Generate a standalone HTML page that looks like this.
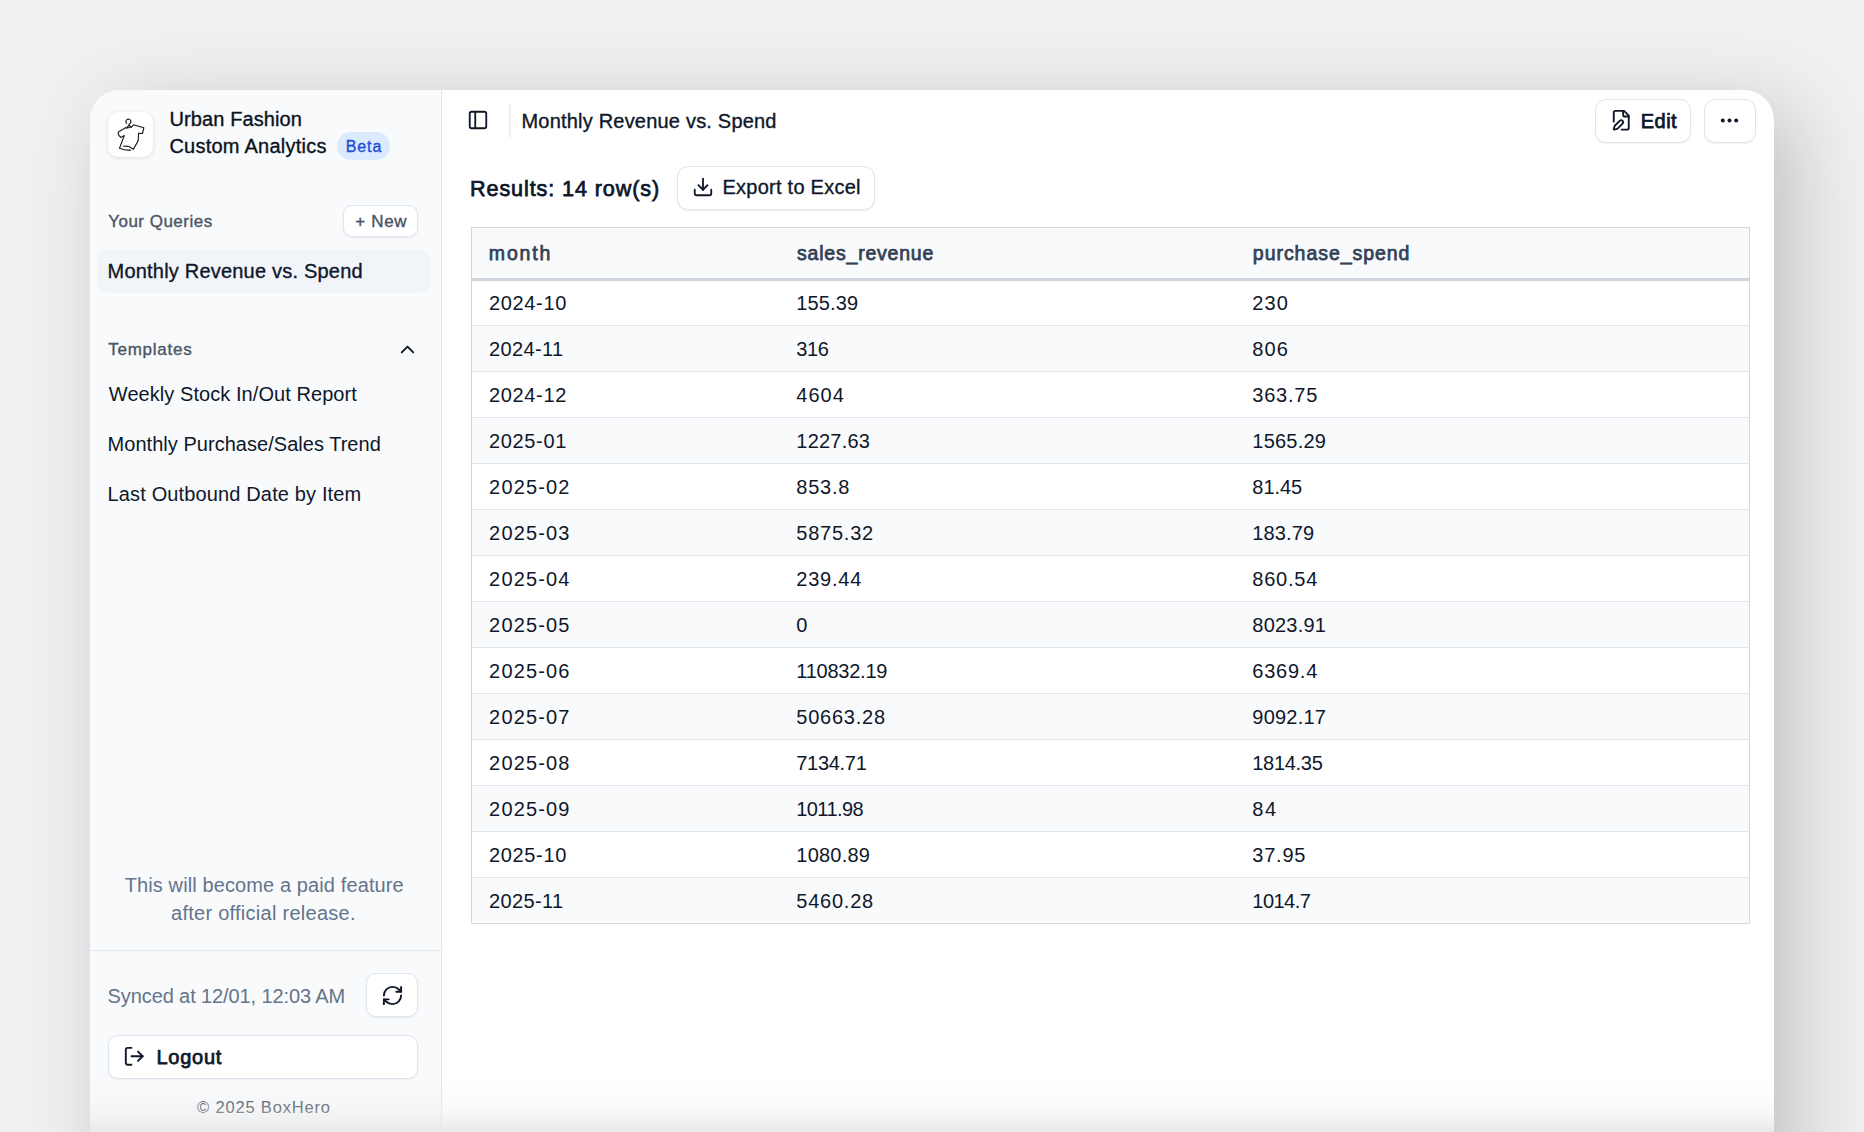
<!DOCTYPE html>
<html><head><meta charset="utf-8"><style>
html,body{margin:0;padding:0}
body{width:1864px;height:1132px;overflow:hidden;position:relative;background:#f0f0f2;font-family:"Liberation Sans", sans-serif}
.t{position:absolute;white-space:nowrap;line-height:1}
.abs{position:absolute}
.btn{position:absolute;background:#fff;border:1px solid #dfe5ee;box-sizing:border-box;box-shadow:0 1px 2px rgba(15,23,42,.06)}
svg.ic{position:absolute;fill:none;stroke:#0f172a;stroke-width:2;stroke-linecap:round;stroke-linejoin:round}
</style></head><body>
<div class="abs" style="left:90px;top:90px;width:1684px;height:1200px;border-radius:30px;background:#fff;box-shadow:21px 21px 80px rgba(0,0,0,.2)"></div>
<div class="abs" style="left:90px;top:90px;width:351px;height:1200px;border-top-left-radius:30px;background:#f8fafc;border-right:1px solid #e2e8f0"></div>
<!-- logo -->
<div class="abs" style="left:108px;top:112px;width:45px;height:45px;border-radius:10px;background:#fff;box-shadow:0 1px 4px rgba(0,0,0,.12)"></div>
<svg class="abs" style="left:108px;top:112px" width="45" height="45" viewBox="0 0 45 45" fill="none" stroke="#1c1c1c" stroke-width="1.15" stroke-linecap="round" stroke-linejoin="round">
<path d="M18.6 11.4 A2.5 2.5 0 1 1 21.3 12 L20.8 13.3"/>
<path d="M20.8 13.3 L18.3 16.2 L23.6 15 Z"/>
<path d="M17.9 15.6 L10.4 19.9 Q9.4 22.6 12.7 25.4 L16.3 23.6 L11.5 36.3 Q17 38.6 22.6 38.1"/>
<path d="M15.5 34.2 Q19 33.8 21 34.5 L25.4 37.3 L30.2 28.6 L30.6 21.2 L34.5 21.5 L35.8 15.8 L25.4 12.8 L23.6 15"/>
</svg>
<!-- beta badge -->
<div class="abs" style="left:337px;top:132px;width:53px;height:27.5px;border-radius:14px;background:#dbeafe"></div>
<!-- new btn -->
<div class="btn" style="left:343px;top:205px;width:75px;height:32px;border-radius:9px"></div>
<!-- selected item -->
<div class="abs" style="left:97px;top:249px;width:333px;height:44px;border-radius:11px;background:#f1f5f9"></div>
<!-- chevron -->
<svg class="ic" style="left:396px;top:337.5px" width="23" height="23" viewBox="0 0 24 24" stroke="#4b5563" stroke-width="2"><path d="m18 15-6-6-6 6"/></svg>
<!-- divider -->
<div class="abs" style="left:90px;top:949.5px;width:351px;height:1.2px;background:#e2e8f0"></div>
<!-- refresh btn -->
<div class="btn" style="left:366px;top:973px;width:52px;height:44px;border-radius:10px"></div>
<svg class="ic" style="left:380.5px;top:984px" width="23" height="23" viewBox="0 0 24 24" stroke-width="2.1"><path d="M3 12a9 9 0 0 1 9-9 9.75 9.75 0 0 1 6.74 2.74L21 8"/><path d="M21 3v5h-5"/><path d="M21 12a9 9 0 0 1-9 9 9.75 9.75 0 0 1-6.74-2.74L3 16"/><path d="M8 16H3v5"/></svg>
<!-- logout btn -->
<div class="btn" style="left:108px;top:1035px;width:310px;height:44px;border-radius:10px"></div>
<svg class="ic" style="left:123px;top:1045px" width="22.5" height="22.5" viewBox="0 0 24 24" stroke-width="2.1"><path d="M9 21H5a2 2 0 0 1-2-2V5a2 2 0 0 1 2-2h4"/><polyline points="16 17 21 12 16 7"/><line x1="21" x2="9" y1="12" y2="12"/></svg>
<!-- header -->
<svg class="ic" style="left:466.7px;top:108.9px" width="22" height="22" viewBox="0 0 24 24" stroke-width="2"><rect width="18" height="18" x="3" y="3" rx="2"/><path d="M9 3v18"/></svg>
<div class="abs" style="left:509px;top:104px;width:2px;height:33px;background:#e8edf4"></div>
<div class="btn" style="left:1595px;top:98.5px;width:96px;height:44px;border-radius:11px"></div>
<svg class="ic" style="left:1610px;top:109px" width="22.5" height="22.5" viewBox="0 0 24 24" stroke-width="2.1"><path d="M12.5 22H18a2 2 0 0 0 2-2V7l-5-5H6a2 2 0 0 0-2 2v9.5"/><path d="M14 2v4a2 2 0 0 0 2 2h4"/><path d="M13.378 15.626a1 1 0 1 0-3.004-3.004l-5.01 5.012a2 2 0 0 0-.506.854l-.837 2.87a.5.5 0 0 0 .62.62l2.87-.837a2 2 0 0 0 .854-.506z"/></svg>
<div class="btn" style="left:1703.5px;top:98.5px;width:52px;height:44px;border-radius:11px"></div>
<svg class="abs" style="left:1719px;top:115px" width="21" height="11" viewBox="0 0 21 11" fill="#0f172a"><circle cx="3.8" cy="5.4" r="2"/><circle cx="10.5" cy="5.4" r="2"/><circle cx="17.2" cy="5.4" r="2"/></svg>
<!-- export btn -->
<div class="btn" style="left:677px;top:165.5px;width:197.5px;height:44px;border-radius:11px"></div>
<svg class="ic" style="left:692px;top:175.9px" width="22" height="22" viewBox="0 0 24 24" stroke-width="2.1"><path d="M21 15v4a2 2 0 0 1-2 2H5a2 2 0 0 1-2-2v-4"/><polyline points="7 10 12 15 17 10"/><line x1="12" x2="12" y1="15" y2="3"/></svg>
<div style="position:absolute;left:470.5px;top:227px;width:1279.5px;height:697px;background:#fff"></div><div style="position:absolute;left:471.5px;top:228px;width:1277.5px;height:50px;background:#f8fafc"></div><div style="position:absolute;left:471.5px;top:278px;width:1277.5px;height:2.5px;background:#cfd5dd"></div><div style="position:absolute;left:471.5px;top:326px;width:1277.5px;height:46px;background:#f8fafc"></div><div style="position:absolute;left:471.5px;top:418px;width:1277.5px;height:46px;background:#f8fafc"></div><div style="position:absolute;left:471.5px;top:510px;width:1277.5px;height:46px;background:#f8fafc"></div><div style="position:absolute;left:471.5px;top:602px;width:1277.5px;height:46px;background:#f8fafc"></div><div style="position:absolute;left:471.5px;top:694px;width:1277.5px;height:46px;background:#f8fafc"></div><div style="position:absolute;left:471.5px;top:786px;width:1277.5px;height:46px;background:#f8fafc"></div><div style="position:absolute;left:471.5px;top:878px;width:1277.5px;height:46px;background:#f8fafc"></div><div style="position:absolute;left:471px;top:325px;width:1278px;height:1px;background:#e3e6ea"></div><div style="position:absolute;left:471px;top:371px;width:1278px;height:1px;background:#e3e6ea"></div><div style="position:absolute;left:471px;top:417px;width:1278px;height:1px;background:#e3e6ea"></div><div style="position:absolute;left:471px;top:463px;width:1278px;height:1px;background:#e3e6ea"></div><div style="position:absolute;left:471px;top:509px;width:1278px;height:1px;background:#e3e6ea"></div><div style="position:absolute;left:471px;top:555px;width:1278px;height:1px;background:#e3e6ea"></div><div style="position:absolute;left:471px;top:601px;width:1278px;height:1px;background:#e3e6ea"></div><div style="position:absolute;left:471px;top:647px;width:1278px;height:1px;background:#e3e6ea"></div><div style="position:absolute;left:471px;top:693px;width:1278px;height:1px;background:#e3e6ea"></div><div style="position:absolute;left:471px;top:739px;width:1278px;height:1px;background:#e3e6ea"></div><div style="position:absolute;left:471px;top:785px;width:1278px;height:1px;background:#e3e6ea"></div><div style="position:absolute;left:471px;top:831px;width:1278px;height:1px;background:#e3e6ea"></div><div style="position:absolute;left:471px;top:877px;width:1278px;height:1px;background:#e3e6ea"></div>
<div class="abs" style="left:470.5px;top:227px;width:1279.5px;height:697px;border:1px solid #d4d8de;box-sizing:border-box"></div>
<div class="t" style="left:169.40px;top:109.17px;font-size:20px;color:#0b1220;letter-spacing:0.118px;-webkit-text-stroke:0.35px #0b1220">Urban Fashion</div><div class="t" style="left:169.40px;top:135.57px;font-size:20px;color:#0b1220;letter-spacing:0.241px;-webkit-text-stroke:0.35px #0b1220">Custom Analytics</div><div class="t" style="left:345.74px;top:138.76px;font-size:16px;color:#1d4ed8;letter-spacing:0.893px;-webkit-text-stroke:0.35px #1d4ed8">Beta</div><div class="t" style="left:108.18px;top:212.91px;font-size:17px;color:#4b5563;letter-spacing:0.490px;-webkit-text-stroke:0.35px #4b5563">Your Queries</div><div class="t" style="left:355.18px;top:213.21px;font-size:17px;color:#475161;letter-spacing:0.682px;-webkit-text-stroke:0.35px #475161">+ New</div><div class="t" style="left:107.60px;top:261.07px;font-size:20px;color:#0f172a;letter-spacing:0.202px;-webkit-text-stroke:0.35px #0f172a">Monthly Revenue vs. Spend</div><div class="t" style="left:108.28px;top:340.91px;font-size:17px;color:#4b5563;letter-spacing:0.739px;-webkit-text-stroke:0.35px #4b5563">Templates</div><div class="t" style="left:108.80px;top:384.07px;font-size:20px;color:#0f172a;letter-spacing:0.064px">Weekly Stock In/Out Report</div><div class="t" style="left:107.60px;top:434.17px;font-size:20px;color:#0f172a;letter-spacing:0.031px">Monthly Purchase/Sales Trend</div><div class="t" style="left:107.60px;top:484.27px;font-size:20px;color:#0f172a;letter-spacing:0.138px">Last Outbound Date by Item</div><div class="t" style="left:124.70px;top:875.37px;font-size:20px;color:#64748b;letter-spacing:0.110px">This will become a paid feature</div><div class="t" style="left:171.00px;top:902.77px;font-size:20px;color:#64748b;letter-spacing:0.267px">after official release.</div><div class="t" style="left:107.60px;top:985.87px;font-size:20px;color:#64748b;letter-spacing:-0.107px">Synced at 12/01, 12:03 AM</div><div class="t" style="left:156.40px;top:1046.67px;font-size:20px;color:#0f172a;letter-spacing:0.766px;-webkit-text-stroke:0.75px #0f172a">Logout</div><div class="t" style="left:197.01px;top:1099.33px;font-size:16.5px;color:#4b5563;letter-spacing:0.832px">© 2025 BoxHero</div><div class="t" style="left:521.50px;top:110.77px;font-size:20px;color:#0f172a;letter-spacing:0.202px;-webkit-text-stroke:0.35px #0f172a">Monthly Revenue vs. Spend</div><div class="t" style="left:1640.80px;top:110.67px;font-size:20px;color:#0f172a;letter-spacing:0.444px;-webkit-text-stroke:0.75px #0f172a">Edit</div><div class="t" style="left:470.00px;top:177.52px;font-size:21.6px;color:#0f172a;letter-spacing:0.892px;-webkit-text-stroke:0.75px #0f172a">Results: 14 row(s)</div><div class="t" style="left:722.50px;top:177.47px;font-size:20px;color:#0f172a;letter-spacing:0.249px;-webkit-text-stroke:0.35px #0f172a">Export to Excel</div><div class="t" style="left:488.83px;top:243.69px;font-size:19.5px;color:#334155;letter-spacing:1.812px;-webkit-text-stroke:0.75px #334155">month</div><div class="t" style="left:797.03px;top:243.69px;font-size:19.5px;color:#334155;letter-spacing:0.792px;-webkit-text-stroke:0.75px #334155">sales_revenue</div><div class="t" style="left:1252.83px;top:243.69px;font-size:19.5px;color:#334155;letter-spacing:0.957px;-webkit-text-stroke:0.75px #334155">purchase_spend</div><div class="t" style="left:489.10px;top:292.97px;font-size:20px;color:#0f172a;letter-spacing:0.632px">2024-10</div><div class="t" style="left:796.30px;top:292.97px;font-size:20px;color:#0f172a;letter-spacing:0.126px">155.39</div><div class="t" style="left:1252.30px;top:292.97px;font-size:20px;color:#0f172a;letter-spacing:1.163px">230</div><div class="t" style="left:489.10px;top:338.97px;font-size:20px;color:#0f172a;letter-spacing:0.346px">2024-11</div><div class="t" style="left:796.30px;top:338.97px;font-size:20px;color:#0f172a;letter-spacing:-0.438px">316</div><div class="t" style="left:1252.30px;top:338.97px;font-size:20px;color:#0f172a;letter-spacing:1.163px">806</div><div class="t" style="left:489.10px;top:384.97px;font-size:20px;color:#0f172a;letter-spacing:0.632px">2024-12</div><div class="t" style="left:796.30px;top:384.97px;font-size:20px;color:#0f172a;letter-spacing:1.033px">4604</div><div class="t" style="left:1252.30px;top:384.97px;font-size:20px;color:#0f172a;letter-spacing:0.766px">363.75</div><div class="t" style="left:489.10px;top:430.97px;font-size:20px;color:#0f172a;letter-spacing:0.632px">2025-01</div><div class="t" style="left:796.30px;top:430.97px;font-size:20px;color:#0f172a;letter-spacing:0.234px">1227.63</div><div class="t" style="left:1252.30px;top:430.97px;font-size:20px;color:#0f172a;letter-spacing:0.234px">1565.29</div><div class="t" style="left:489.10px;top:476.97px;font-size:20px;color:#0f172a;letter-spacing:1.166px">2025-02</div><div class="t" style="left:796.30px;top:476.97px;font-size:20px;color:#0f172a;letter-spacing:0.759px">853.8</div><div class="t" style="left:1252.30px;top:476.97px;font-size:20px;color:#0f172a;letter-spacing:-0.041px">81.45</div><div class="t" style="left:489.10px;top:522.97px;font-size:20px;color:#0f172a;letter-spacing:1.166px">2025-03</div><div class="t" style="left:796.30px;top:522.97px;font-size:20px;color:#0f172a;letter-spacing:0.767px">5875.32</div><div class="t" style="left:1252.30px;top:522.97px;font-size:20px;color:#0f172a;letter-spacing:0.126px">183.79</div><div class="t" style="left:489.10px;top:568.97px;font-size:20px;color:#0f172a;letter-spacing:1.166px">2025-04</div><div class="t" style="left:796.30px;top:568.97px;font-size:20px;color:#0f172a;letter-spacing:0.766px">239.44</div><div class="t" style="left:1252.30px;top:568.97px;font-size:20px;color:#0f172a;letter-spacing:0.766px">860.54</div><div class="t" style="left:489.10px;top:614.97px;font-size:20px;color:#0f172a;letter-spacing:1.166px">2025-05</div><div class="t" style="left:796.30px;top:614.97px;font-size:20px;color:#0f172a;letter-spacing:0.750px">0</div><div class="t" style="left:1252.30px;top:614.97px;font-size:20px;color:#0f172a;letter-spacing:0.234px">8023.91</div><div class="t" style="left:489.10px;top:660.97px;font-size:20px;color:#0f172a;letter-spacing:1.166px">2025-06</div><div class="t" style="left:796.30px;top:660.97px;font-size:20px;color:#0f172a;letter-spacing:-0.245px">110832.19</div><div class="t" style="left:1252.30px;top:660.97px;font-size:20px;color:#0f172a;letter-spacing:0.766px">6369.4</div><div class="t" style="left:489.10px;top:706.97px;font-size:20px;color:#0f172a;letter-spacing:1.166px">2025-07</div><div class="t" style="left:796.30px;top:706.97px;font-size:20px;color:#0f172a;letter-spacing:0.768px">50663.28</div><div class="t" style="left:1252.30px;top:706.97px;font-size:20px;color:#0f172a;letter-spacing:0.234px">9092.17</div><div class="t" style="left:489.10px;top:752.97px;font-size:20px;color:#0f172a;letter-spacing:1.166px">2025-08</div><div class="t" style="left:796.30px;top:752.97px;font-size:20px;color:#0f172a;letter-spacing:-0.299px">7134.71</div><div class="t" style="left:1252.30px;top:752.97px;font-size:20px;color:#0f172a;letter-spacing:-0.299px">1814.35</div><div class="t" style="left:489.10px;top:798.97px;font-size:20px;color:#0f172a;letter-spacing:1.166px">2025-09</div><div class="t" style="left:796.30px;top:798.97px;font-size:20px;color:#0f172a;letter-spacing:-0.585px">1011.98</div><div class="t" style="left:1252.30px;top:798.97px;font-size:20px;color:#0f172a;letter-spacing:1.550px">84</div><div class="t" style="left:489.10px;top:844.97px;font-size:20px;color:#0f172a;letter-spacing:0.632px">2025-10</div><div class="t" style="left:796.30px;top:844.97px;font-size:20px;color:#0f172a;letter-spacing:0.234px">1080.89</div><div class="t" style="left:1252.30px;top:844.97px;font-size:20px;color:#0f172a;letter-spacing:0.759px">37.95</div><div class="t" style="left:489.10px;top:890.97px;font-size:20px;color:#0f172a;letter-spacing:0.346px">2025-11</div><div class="t" style="left:796.30px;top:890.97px;font-size:20px;color:#0f172a;letter-spacing:0.767px">5460.28</div><div class="t" style="left:1252.30px;top:890.97px;font-size:20px;color:#0f172a;letter-spacing:-0.514px">1014.7</div>
<div class="abs" style="left:90px;top:1078px;width:1684px;height:54px;background:linear-gradient(rgba(233,233,233,0) 0%,rgba(233,233,233,.1) 37%,rgba(233,233,233,.33) 61%,rgba(233,233,233,.58) 78%,#e9e9e9 100%)"></div>
</body></html>
